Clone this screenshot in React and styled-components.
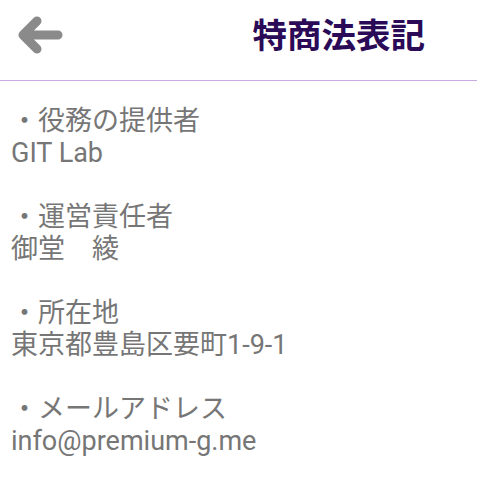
import React from "react";
import styled, { createGlobalStyle } from "styled-components";

const GlobalStyle = createGlobalStyle`
  html, body {
    margin: 0;
    padding: 0;
    background: #ffffff;
  }
  body {
    font-family: "Roboto", "Noto Sans CJK JP", sans-serif;
  }
`;

const items = [
  { label: "・役務の提供者", value: "GIT Lab" },
  { label: "・運営責任者", value: "御堂　綾" },
  { label: "・所在地", value: "東京都豊島区要町1-9-1" },
  { label: "・メールアドレス", value: "info@premium-g.me" },
];

const BackArrow = () => (
  <svg width="50" height="44" viewBox="0 0 50 44" fill="none">
    <path
      d="M7 22 L42 22 M7 22 L21 8 M7 22 L21 36"
      stroke="#8a8a8a"
      strokeWidth="9"
      strokeLinecap="round"
      strokeLinejoin="round"
    />
  </svg>
);

const App = () => {
  return (
    <Wrapper>
      <GlobalStyle />
      <Header>
        <BackButton aria-label="back">
          <BackArrow />
        </BackButton>
        <Title>特商法表記</Title>
      </Header>
      <Content>
        {items.map((item) => (
          <Section key={item.label}>
            <Label>{item.label}</Label>
            <Value>{item.value}</Value>
          </Section>
        ))}
      </Content>
    </Wrapper>
  );
};

const Wrapper = styled.div`
  width: 477px;
  min-height: 478px;
  background: #ffffff;
`;

const Header = styled.header`
  display: flex;
  justify-content: space-between;
  align-items: flex-start;
  height: 81px;
  box-sizing: border-box;
  padding: 13px 52px 0 16px;
  border-bottom: 1px solid #c9a9e2;
`;

const BackButton = styled.button`
  display: flex;
  padding: 0;
  margin: 0;
  border: none;
  background: none;
  cursor: pointer;
`;

const Title = styled.h1`
  margin: 0;
  padding-top: 2px;
  font-family: "Noto Sans CJK JP", sans-serif;
  font-size: 34.5px;
  line-height: 36px;
  font-weight: 700;
  color: #2b0a57;
`;

const Content = styled.main`
  display: flex;
  flex-direction: column;
  gap: 32px;
  padding: 24px 11px 0;
`;

const Section = styled.section`
  display: flex;
  flex-direction: column;
  font-size: 27px;
  line-height: 32px;
  color: #767676;
`;

const Label = styled.div``;

const Value = styled.div``;

export default App;
